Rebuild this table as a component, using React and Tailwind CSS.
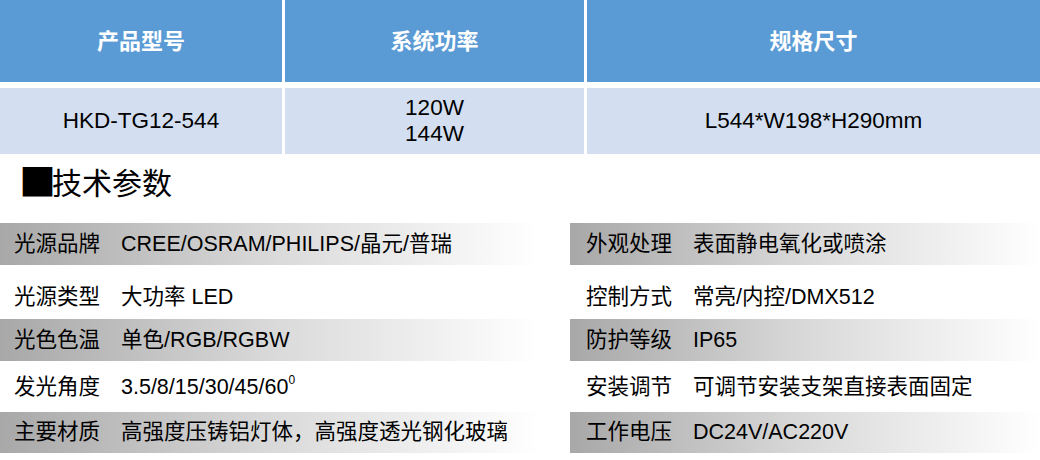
const specsLeft = [
  { label: "光源品牌", value: "CREE/OSRAM/PHILIPS/晶元/普瑞" },
  { label: "光源类型", value: "大功率 LED" },
  { label: "光色色温", value: "单色/RGB/RGBW" },
  { label: "发光角度", value: <>3.5/8/15/30/45/60<sup className="text-[12px] align-top leading-none relative top-[3px]">0</sup></> },
  { label: "主要材质", value: "高强度压铸铝灯体，高强度透光钢化玻璃" },
];

const specsRight = [
  { label: "外观处理", value: "表面静电氧化或喷涂" },
  { label: "控制方式", value: "常亮/内控/DMX512" },
  { label: "防护等级", value: "IP65" },
  { label: "安装调节", value: "可调节安装支架直接表面固定" },
  { label: "工作电压", value: "DC24V/AC220V" },
];

// row heights taken from the picture: shaded rows are thinner than the white ones
const rowHeights = ["h-[42px]", "h-[54px]", "h-[42px]", "h-[51px]", "h-[41px]"];

function SpecRow({ label, value, index, padLeft }) {
  const shaded = index % 2 === 0;
  return (
    <div
      className={`${rowHeights[index]} flex items-center ${padLeft} ${
        shaded ? "bg-gradient-to-r from-[#a9a8a8] via-[#d9d9d9] to-white" : index === 1 ? "pt-[10px]" : "pt-[2px]"
      }`}
    >
      <span className="w-[107px] shrink-0">{label}</span>
      <span className="whitespace-nowrap">{value}</span>
    </div>
  );
}

export default function App() {
  return (
    <div
      className="w-[1040px] h-[460px] bg-white overflow-hidden text-black"
      style={{ fontFamily: '"Liberation Sans", Arial, "Noto Sans CJK SC", sans-serif' }}
    >
      {/* product table */}
      <div className="grid grid-cols-[282px_299px_1fr] gap-x-[3px] gap-y-[6px] bg-white">
        <div className="h-[82px] bg-[#5b9bd5] text-white font-bold text-[22px] flex items-center justify-center">产品型号</div>
        <div className="h-[82px] bg-[#5b9bd5] text-white font-bold text-[22px] flex items-center justify-center">系统功率</div>
        <div className="h-[82px] bg-[#5b9bd5] text-white font-bold text-[22px] flex items-center justify-center">规格尺寸</div>
        <div className="h-[66px] bg-[#d3dff0] text-[22.5px] flex items-center justify-center">HKD-TG12-544</div>
        <div className="h-[66px] bg-[#d3dff0] text-[22.5px] flex flex-col items-center justify-center leading-[26px]">
          <span>120W</span>
          <span>144W</span>
        </div>
        <div className="h-[66px] bg-[#d3dff0] text-[22.5px] flex items-center justify-center">L544*W198*H290mm</div>
      </div>

      {/* section title */}
      <div className="h-[69px] pl-[19px] pb-[16px] text-[30px] leading-[40px] font-['Noto_Sans_CJK_SC',sans-serif] flex items-center">
        <span className="text-[37px] leading-none">■</span>
        <span className="-ml-[4px]">技术参数</span>
      </div>

      {/* technical parameters */}
      <div className="grid grid-cols-[540px_1fr] gap-x-[30px] text-[21.5px]">
        <div className="flex flex-col">
          {specsLeft.map((s, i) => (
            <SpecRow key={s.label} {...s} index={i} padLeft="pl-[14px]" />
          ))}
        </div>
        <div className="flex flex-col">
          {specsRight.map((s, i) => (
            <SpecRow key={s.label} {...s} index={i} padLeft="pl-[16px]" />
          ))}
        </div>
      </div>
    </div>
  );
}
